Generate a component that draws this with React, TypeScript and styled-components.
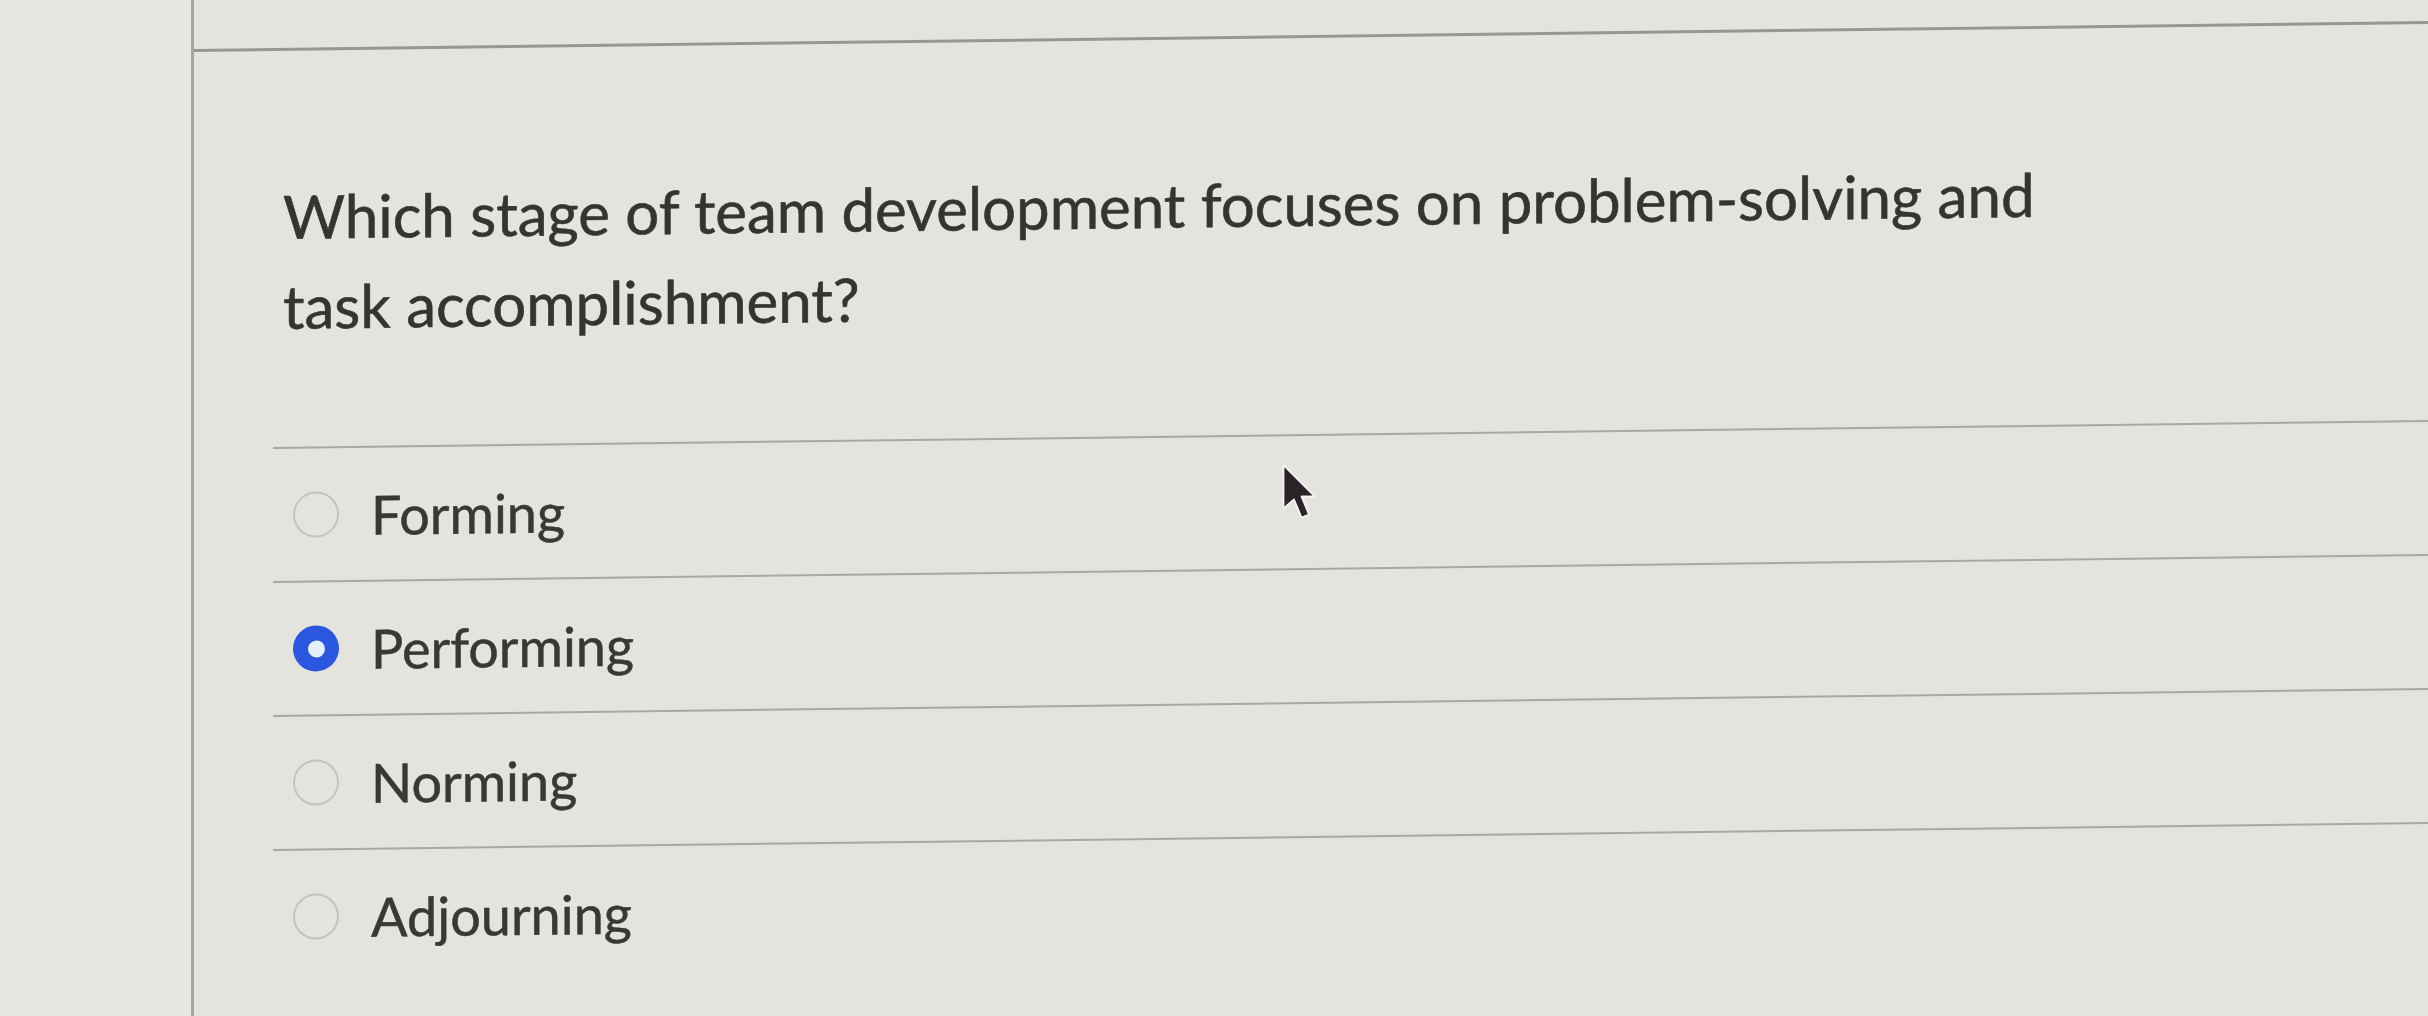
import styled, { createGlobalStyle } from "styled-components";
import { useState } from "react";

const GlobalStyle = createGlobalStyle`
  html, body {
    margin: 0;
    padding: 0;
    background-color: #e4e3de;
    font-family: Lato, "Open Sans", "Liberation Sans", sans-serif;
    overflow: hidden;
  }
`;

const Page = styled.div`
  position: relative;
  display: flex;
  width: 100vw;
  height: 100vh;
  background-color: #e4e3de;
`;

const LeftRail = styled.div`
  width: 191px;
  flex-shrink: 0;
  background-color: #e7e6e2;
  border-right: 3px solid #a6a5a0;
`;

const Main = styled.div`
  flex: 1;
  display: flex;
  flex-direction: column;
  transform: skewY(-0.72deg);
  transform-origin: left top;
`;

const TopBar = styled.div`
  height: 49px;
  flex-shrink: 0;
  border-bottom: 3px solid #979691;
`;

const Question = styled.p`
  margin: 120px 0 0 89px;
  max-width: 1900px;
  font-size: 60px;
  line-height: 90px;
  color: #363433;
  -webkit-text-stroke: 0.6px #363433;
`;

const Answers = styled.div`
  margin: 96px 0 0 79px;
  display: flex;
  flex-direction: column;
`;

const Option = styled.label`
  display: flex;
  align-items: center;
  height: 132px;
  padding-left: 20px;
  border-top: 2px solid #a9a8a3;
  cursor: pointer;
`;

const Radio = styled.span<{ $checked: boolean }>`
  box-sizing: border-box;
  width: 46px;
  height: 46px;
  flex-shrink: 0;
  border-radius: 50%;
  display: flex;
  align-items: center;
  justify-content: center;
  border: ${(p) => (p.$checked ? "none" : "2.5px solid #c4c3be")};
  background-color: ${(p) => (p.$checked ? "#2a56e0" : "transparent")};

  &::after {
    content: "";
    display: ${(p) => (p.$checked ? "block" : "none")};
    width: 17px;
    height: 17px;
    border-radius: 50%;
    background-color: #e4efff;
  }
`;

const Label = styled.span`
  margin-left: 32px;
  font-size: 54px;
  color: #3a3837;
  -webkit-text-stroke: 0.5px #3a3837;
`;

const Cursor = styled.svg`
  position: absolute;
  left: 1282px;
  top: 463px;
  width: 36px;
  height: 58px;
  pointer-events: none;
`;

const options = ["Forming", "Performing", "Norming", "Adjourning"];

function App() {
  const [selected, setSelected] = useState("Performing");

  return (
    <Page>
      <GlobalStyle />
      <LeftRail />
      <Main>
        <TopBar />
        <Question>
          Which stage of team development focuses on problem-solving and
          <br />
          task accomplishment?
        </Question>
        <Answers>
          {options.map((o) => (
            <Option key={o} onClick={() => setSelected(o)}>
              <Radio $checked={selected === o} />
              <Label>{o}</Label>
            </Option>
          ))}
        </Answers>
      </Main>
      <Cursor viewBox="0 0 24 38">
        <path
          d="M1 1 L1 30 L8 24 L13 36 L18 34 L13 22 L22 22 Z"
          fill="#2a2428"
          stroke="#f4f4f2"
          strokeWidth="1.2"
          strokeLinejoin="round"
        />
      </Cursor>
    </Page>
  );
}

export default App;
